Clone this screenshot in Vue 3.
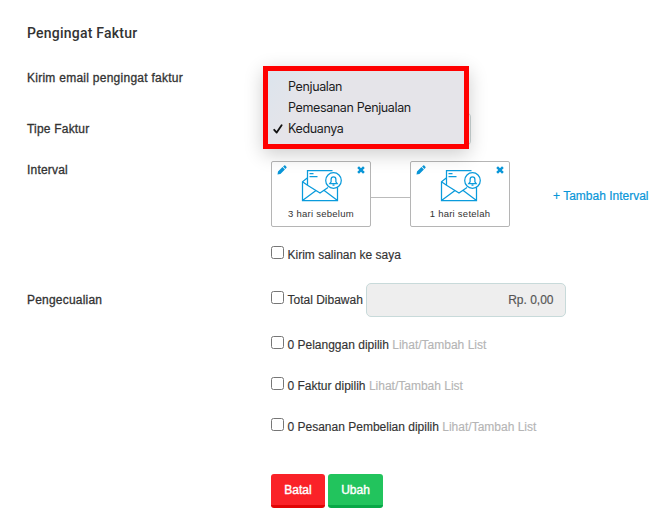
<!-- InvoiceReminder.vue -->
<template>
  <form class="reminder" @submit.prevent>
    <h2 class="title">Pengingat Faktur</h2>

    <div class="row row-email">
      <span class="label l-email">Kirim email pengingat faktur</span>
    </div>

    <div class="row row-type">
      <span class="label l-type">Tipe Faktur</span>
      <div class="select-box">
        <ul class="menu">
          <li v-for="option in options" :key="option" @click="selected = option">
            <svg v-if="selected === option" class="check" viewBox="0 0 10 10">
              <path d="M1.2 5.8 3.7 8.6 8.6 1.2" />
            </svg>
            <span>{{ option }}</span>
          </li>
        </ul>
      </div>
    </div>

    <div class="row row-interval">
      <span class="label">Interval</span>
      <div class="intervals">
        <template v-for="(interval, index) in intervals" :key="interval">
          <span v-if="index" class="connector"></span>
          <div class="card">
            <svg class="pencil" viewBox="0 0 10 10">
              <path d="M.5 9.5 1 6.6 5.5 2.1 7.9 4.5 3.4 9ZM6.1 1.6 7.2.5Q7.8.1 8.3.6L9.4 1.7Q9.9 2.2 9.5 2.7L8.4 3.9Z" />
            </svg>
            <svg class="remove" viewBox="0 0 8 8">
              <path d="M1.1 1.1 6.9 6.9M6.9 1.1 1.1 6.9" />
            </svg>
            <svg class="envelope" viewBox="0 0 42 34">
              <path d="M6.5 8.8 1.5 12.8V31.5H36.5V18M6.5 16V1.5H31.5M1.5 12.8 6.5 16.2 19 24 27 18.5M1.5 31.5 15 21.5M36.5 31.5 23.2 21.5" />
              <path d="M8.5 4.5H12.5M8.5 7.5H16.5" />
              <circle cx="32.5" cy="11.5" r="7.8" />
              <path d="M28.8 14.5H36.2L34.9 12.8V10.5C34.9 7 30.1 7 30.1 10.5V12.8ZM31.5 16H33.5" />
            </svg>
            <span>{{ interval }}</span>
          </div>
        </template>
      </div>
      <a class="add">+ Tambah Interval</a>
    </div>

    <div class="row row-copy">
      <span></span>
      <label class="choice"><input type="checkbox" /><span>Kirim salinan ke saya</span></label>
    </div>

    <div class="row row-total">
      <span class="label l-except">Pengecualian</span>
      <div class="total">
        <label class="choice"><input type="checkbox" /><span>Total Dibawah</span></label>
        <div class="amount">Rp. 0,00</div>
      </div>
    </div>

    <div v-for="item in exceptions" :key="item" class="row row-list">
      <span></span>
      <div class="choice">
        <input type="checkbox" />
        <span>{{ item }} <a>Lihat/Tambah List</a></span>
      </div>
    </div>

    <div class="row row-actions">
      <span></span>
      <div class="actions">
        <button class="btn cancel" type="button">Batal</button>
        <button class="btn save" type="submit">Ubah</button>
      </div>
    </div>
  </form>
</template>

<script setup>
import { ref } from 'vue';

const selected = ref('Keduanya');

const options = ['Penjualan', 'Pemesanan Penjualan', 'Keduanya'];

const intervals = ['3 hari sebelum', '1 hari setelah'];

const exceptions = [
  '0 Pelanggan dipilih',
  '0 Faktur dipilih',
  '0 Pesanan Pembelian dipilih'
];
</script>

<style>
body {
  margin: 0;
  background: #fff;
}
</style>

<style scoped>
.reminder {
  box-sizing: border-box;
  width: 662px;
  height: 526px;
  padding: 22px 0 0 27px;
  overflow: hidden;
  background: #fff;
  color: #333;
  font: 12px/18px "Liberation Sans", Arial, sans-serif;
}

.title {
  margin: 0;
  height: 22px;
  font: 500 14px/22px Roboto, sans-serif;
  letter-spacing: 0.22px;
}

.row {
  display: grid;
  grid-template-columns: 244px 1fr;
}

.label {
  letter-spacing: 0.2px;
  -webkit-text-stroke: 0.3px #333;
}

.row-email {
  margin-top: 25px;
  height: 18px;
}

.l-email {
  letter-spacing: 0.26px;
}

.row-type {
  margin-top: 25px;
  height: 34px;
}

.l-type {
  padding-top: 8px;
}

.select-box {
  position: relative;
  box-sizing: border-box;
  width: 200px;
  height: 34px;
  border: 1px solid #ccd6d6;
  border-radius: 5px;
}

.menu {
  position: absolute;
  top: -47px;
  left: -9px;
  z-index: 2;
  box-sizing: border-box;
  width: 206px;
  height: 83px;
  margin: 0;
  padding: 5px 0;
  border: 5px solid #f00;
  background: linear-gradient(120deg, #dce4ed 0, #e5e4e9 22%);
  box-shadow: 0 5px 18px rgba(0, 0, 0, 0.2);
  list-style: none;
  color: #1c1c1e;
  font: 12.5px/21px Inter, sans-serif;
  letter-spacing: -0.37px;
}

.menu li {
  position: relative;
  height: 21px;
  padding-left: 20px;
  white-space: nowrap;
}

.check {
  position: absolute;
  top: 6px;
  left: 5px;
  width: 10px;
  height: 10px;
  fill: none;
  stroke: #111;
  stroke-width: 1.8;
  stroke-linecap: round;
  stroke-linejoin: round;
}

.row-interval {
  grid-template-columns: 244px 239px 1fr;
  margin-top: 15px;
  height: 66px;
}

.intervals {
  display: flex;
  align-items: center;
}

.connector {
  width: 39px;
  height: 1px;
  margin-top: 6px;
  background: #bbb;
}

.card {
  position: relative;
  box-sizing: border-box;
  width: 100px;
  height: 66px;
  padding-top: 7px;
  border: 1px solid #b5b5b5;
  border-radius: 2px;
  text-align: center;
  font-size: 9.5px;
  line-height: 12px;
  letter-spacing: 0.25px;
}

.card span {
  display: block;
  margin-top: 5px;
}

.pencil {
  position: absolute;
  top: 3px;
  left: 5px;
  width: 10px;
  height: 10px;
  fill: #0996d8;
}

.remove {
  position: absolute;
  top: 4px;
  right: 5px;
  width: 8px;
  height: 8px;
  fill: none;
  stroke: #0996d8;
  stroke-width: 2.5;
}

.envelope {
  display: block;
  width: 42px;
  height: 34px;
  margin-left: 29px;
  fill: none;
  stroke: #0a9bdc;
  stroke-width: 1.25;
}

.envelope circle {
  fill: #fff;
}

.add {
  margin: 26px 0 0 43px;
  color: #0996d8;
  white-space: nowrap;
  -webkit-text-stroke: 0.2px #0996d8;
}

.row-copy {
  margin-top: 19px;
  height: 17px;
}

.choice {
  display: flex;
  align-items: flex-start;
  height: 18px;
  white-space: nowrap;
  -webkit-text-stroke: 0.15px;
}

.choice input {
  width: 13px;
  height: 13px;
  margin: 0 3.5px 0 0;
}

.choice a {
  color: #b5b5b5;
}

.row-total {
  margin-top: 20px;
  height: 34px;
}

.l-except {
  padding-top: 8px;
}

.total {
  display: flex;
}

.total .choice {
  width: 95px;
  padding-top: 8px;
}

.amount {
  box-sizing: border-box;
  width: 200px;
  height: 34px;
  padding: 0 11.5px;
  border: 1px solid #c8dada;
  border-radius: 5px;
  background: #eee;
  color: #555;
  line-height: 32px;
  text-align: right;
  -webkit-text-stroke: 0.15px;
}

.row-list {
  margin-top: 23px;
  height: 18px;
}

.row-total + .row-list {
  margin-top: 19px;
}

.row-actions {
  margin-top: 38px;
}

.actions {
  display: flex;
  gap: 3px;
}

.btn {
  width: 54px;
  height: 34px;
  padding: 1px 0 0;
  border: 0;
  border-bottom: 3px solid;
  border-radius: 3px;
  color: #fff;
  font: 12px/30px "Liberation Sans", Arial, sans-serif;
  -webkit-text-stroke: 0.4px #fff;
}

.cancel {
  border-color: #e10505;
  background: #fa2228;
}

.save {
  width: 55px;
  border-color: #08a847;
  background: #22c45d;
}
</style>
